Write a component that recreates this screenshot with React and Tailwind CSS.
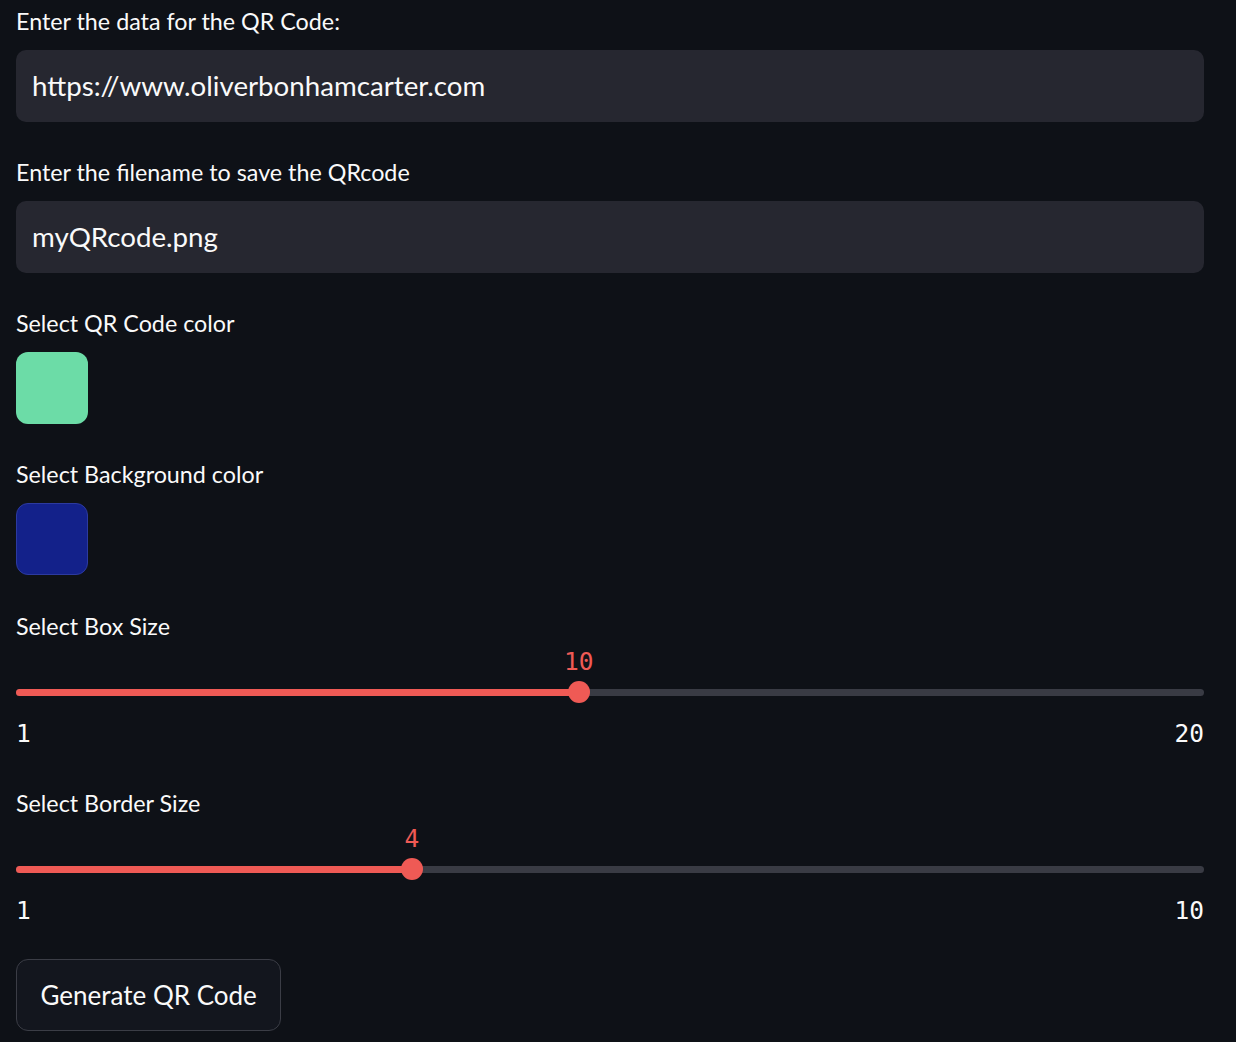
import React from 'react';

const sans = { fontFamily: 'Lato, "Noto Sans", sans-serif' };

const Label = ({ children }) => (
  <div className="h-[30px] leading-[30px] text-[23.3px] text-[#fafafa] mb-[14px]">{children}</div>
);

const TextInput = ({ value }) => (
  <div className="h-[72px] rounded-[10px] bg-[#262730] px-4 flex items-center text-[27.7px] text-[#fafafa]">
    {value}
  </div>
);

const Slider = ({ label, value, min, max }) => {
  const pct = ((value - min) / (max - min)) * 100;
  return (
    <div className="flex flex-col">
      <div className="h-[30px] leading-[30px] text-[23.3px] text-[#fafafa]">{label}</div>
      <div className="relative h-[24px] mt-[9px] font-['DejaVu_Sans_Mono',monospace] text-[24.5px] leading-[24px] text-[#ef5a55]">
        <span className="absolute -translate-x-1/2" style={{ left: `${pct}%` }}>{value}</span>
      </div>
      <div className="relative h-[22px] mt-[7px] flex items-center">
        <div className="w-full h-[7px] rounded-full bg-[#393b44]" />
        <div className="absolute left-0 h-[7px] rounded-full bg-[#ef5a55]" style={{ width: `${pct}%` }} />
        <div
          className="absolute w-[22px] h-[22px] rounded-full bg-[#ef5a55] -translate-x-1/2"
          style={{ left: `${pct}%` }}
        />
      </div>
      <div className="flex justify-between mt-[19px] h-[24px] leading-[24px] font-['DejaVu_Sans_Mono',monospace] text-[24.5px] text-[#fafafa]">
        <span>{min}</span>
        <span>{max}</span>
      </div>
    </div>
  );
};

export default function App() {
  return (
    <div className="min-h-screen bg-[#0e1117] px-4 pt-[6px] pb-10" style={sans}>
      <div className="w-[1188px] flex flex-col">
        <Label>Enter the data for the QR Code:</Label>
        <TextInput value="https://www.oliverbonhamcarter.com" />

        <div className="mt-[35px]">
          <Label>Enter the filename to save the QRcode</Label>
          <TextInput value="myQRcode.png" />
        </div>

        <div className="mt-[35px]">
          <Label>Select QR Code color</Label>
          <div className="w-[72px] h-[72px] rounded-[12px] bg-[#6cdca7]" />
        </div>

        <div className="mt-[35px]">
          <Label>Select Background color</Label>
          <div className="w-[72px] h-[72px] rounded-[12px] bg-[#13218a] border border-[#2c3aa0]" />
        </div>

        <div className="mt-[36px]">
          <Slider label="Select Box Size" value={10} min={1} max={20} />
        </div>

        <div className="mt-[42px]">
          <Slider label="Select Border Size" value={4} min={1} max={10} />
        </div>

        <div className="mt-[36px]">
          <button className="h-[72px] px-[23.5px] rounded-[12px] border border-[#3b3d46] bg-[#13161e] text-[26px] text-[#fafafa]">
            Generate QR Code
          </button>
        </div>
      </div>
    </div>
  );
}
